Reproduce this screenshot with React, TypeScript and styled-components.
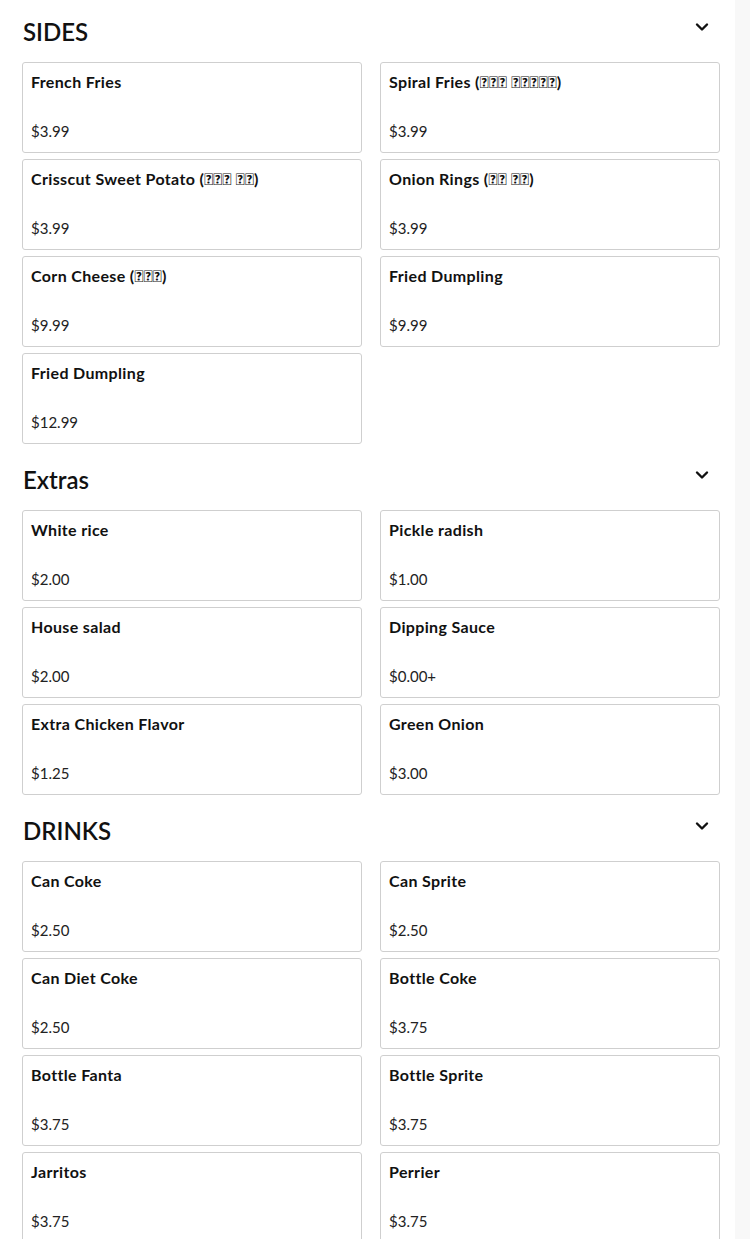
import React from "react";
import styled, { createGlobalStyle } from "styled-components";

const Global = createGlobalStyle`
  html, body { margin: 0; padding: 0; background: #f8f8f8; }
  body { font-family: "Lato", "Noto Sans", sans-serif; color: #111; }
`;

const Page = styled.div`
  width: 735px;
  min-height: 1239px;
  background: #fff;
  box-sizing: border-box;
  padding: 17px 15px 0 22px;
  display: flex;
  flex-direction: column;
  gap: 21px;
`;

const Section = styled.section`
  display: flex;
  flex-direction: column;
  gap: 15px;
`;

const Header = styled.div`
  display: flex;
  align-items: center;
  justify-content: space-between;
  height: 30px;
  padding-right: 11px;
`;

const Title = styled.h2`
  margin: 0;
  font-size: 24px;
  line-height: 30px;
  font-weight: 600;
  color: #111;
  padding-left: 1px;
`;

const Chevron = styled.svg`
  width: 14px;
  height: 14px;
  margin-top: -10px;
`;

const Grid = styled.div`
  display: grid;
  grid-template-columns: 340px 340px;
  column-gap: 18px;
  row-gap: 6px;
`;

const Card = styled.div`
  box-sizing: border-box;
  height: 91px;
  border: 1px solid #cfcfcf;
  border-radius: 3px;
  padding: 9px 8px 11px;
  display: flex;
  flex-direction: column;
  justify-content: space-between;
`;

const Name = styled.div`
  font-size: 16px;
  line-height: 20px;
  font-weight: 700;
  letter-spacing: 0.35px;
  color: #111;
`;

const Price = styled.div`
  font-size: 15px;
  line-height: 20px;
  font-weight: 400;
  color: #222;
`;

type Item = { name: string; price: string };

const T = "\uE000";
const t = (n: number) => T.repeat(n);

const sections: { title: string; items: Item[] }[] = [
  {
    title: "SIDES",
    items: [
      { name: "French Fries", price: "$3.99" },
      { name: `Spiral Fries (${t(3)} ${t(5)})`, price: "$3.99" },
      { name: `Crisscut Sweet Potato (${t(3)} ${t(2)})`, price: "$3.99" },
      { name: `Onion Rings (${t(2)} ${t(2)})`, price: "$3.99" },
      { name: `Corn Cheese (${t(3)})`, price: "$9.99" },
      { name: "Fried Dumpling", price: "$9.99" },
      { name: "Fried Dumpling", price: "$12.99" },
    ],
  },
  {
    title: "Extras",
    items: [
      { name: "White rice", price: "$2.00" },
      { name: "Pickle radish", price: "$1.00" },
      { name: "House salad", price: "$2.00" },
      { name: "Dipping Sauce", price: "$0.00+" },
      { name: "Extra Chicken Flavor", price: "$1.25" },
      { name: "Green Onion", price: "$3.00" },
    ],
  },
  {
    title: "DRINKS",
    items: [
      { name: "Can Coke", price: "$2.50" },
      { name: "Can Sprite", price: "$2.50" },
      { name: "Can Diet Coke", price: "$2.50" },
      { name: "Bottle Coke", price: "$3.75" },
      { name: "Bottle Fanta", price: "$3.75" },
      { name: "Bottle Sprite", price: "$3.75" },
      { name: "Jarritos", price: "$3.75" },
      { name: "Perrier", price: "$3.75" },
    ],
  },
];

const ChevronDown = () => (
  <Chevron viewBox="0 0 14 14" fill="none">
    <path d="M2 4.5 L7 9.5 L12 4.5" stroke="#111" strokeWidth="2.4" strokeLinecap="round" strokeLinejoin="round" />
  </Chevron>
);

export default function App() {
  return (
    <>
      <Global />
      <Page>
        {sections.map((s) => (
          <Section key={s.title}>
            <Header>
              <Title>{s.title}</Title>
              <ChevronDown />
            </Header>
            <Grid>
              {s.items.map((it, i) => (
                <Card key={i}>
                  <Name>{it.name}</Name>
                  <Price>{it.price}</Price>
                </Card>
              ))}
            </Grid>
          </Section>
        ))}
      </Page>
    </>
  );
}
